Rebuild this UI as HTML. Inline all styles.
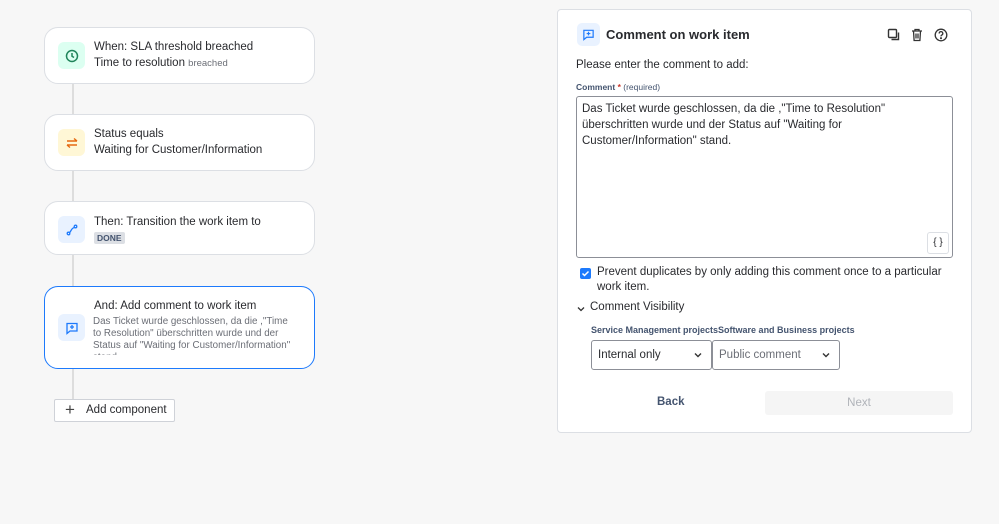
<!DOCTYPE html>
<html><head><meta charset="utf-8"><style>
*{box-sizing:border-box;margin:0;padding:0}
body{width:999px;height:524px;background:#f7f7f7;font-family:"Liberation Sans",sans-serif;color:#292a2e;position:relative;overflow:hidden;font-size:12px}
.abs{position:absolute}
.line{position:absolute;left:72px;width:2px;background:#ddd}
.card{position:absolute;left:44px;width:271px;background:#fff;border:1px solid #dcdfe4;border-radius:14px}
.ic{position:absolute;left:13px;width:27px;height:27px;border-radius:6px;display:flex;align-items:center;justify-content:center}
.t{position:absolute;left:49px;font-size:11.5px;line-height:17px;white-space:nowrap}
.panel{position:absolute;left:557px;top:9px;width:415px;height:424px;background:#fff;border:1px solid #dcdfe4;border-radius:4px}
.sel{position:absolute;top:330px;height:30px;border:1px solid #8c8f97;border-radius:3px;background:#fff;font-size:11.5px;line-height:28px;padding-left:6px}
.chev{position:absolute;right:9px;top:11px}
</style></head><body>
<div class="line" style="top:83px;height:320px"></div>

<div class="card" style="top:27px;height:57px">
 <div class="ic" style="top:14px;background:#dcfff1"><svg width="14" height="14" viewBox="0 0 14 14"><circle cx="7" cy="7" r="5.5" fill="none" stroke="#1f845a" stroke-width="1.5"/><path d="M7 4v3.2l2 1.3" fill="none" stroke="#1f845a" stroke-width="1.5"/></svg></div>
 <div class="t" style="top:11px">When: SLA threshold breached</div>
 <div class="t" style="top:27px">Time to resolution <span style="font-size:9.5px;color:#6b6e76">breached</span></div>
</div>

<div class="card" style="top:114px;height:57px">
 <div class="ic" style="top:14px;background:#fff7d6"><svg width="14" height="14" viewBox="0 0 14 14" fill="none" stroke="#e56910" stroke-width="1.4"><path d="M2 5h10M9 2.5l3 2.5M12 9H2M5 11.5L2 9"/></svg></div>
 <div class="t" style="top:11px">Status equals</div>
 <div class="t" style="top:27px">Waiting for Customer/Information</div>
</div>

<div class="card" style="top:201px;height:54px">
 <div class="ic" style="top:14px;background:#e9f2ff"><svg width="14" height="14" viewBox="0 0 14 14" fill="none" stroke="#1d7afc" stroke-width="1.3"><circle cx="3.5" cy="10.5" r="1.3"/><circle cx="10.5" cy="3.5" r="1.3"/><path d="M4.5 9.5C6 9 6 5 9.5 4.5"/></svg></div>
 <div class="t" style="top:12px">Then: Transition the work item to</div>
 <div class="abs" style="left:49px;top:30px;background:#dcdfe4;font-size:8.5px;font-weight:bold;padding:1px 3px;border-radius:2px;color:#44546f">DONE</div>
</div>

<div class="card" style="top:286px;height:83px;border:1.5px solid #1d7afc;overflow:hidden">
 <div class="ic" style="top:27px;background:#e9f2ff"><svg width="14" height="14" viewBox="0 0 14 14" fill="none" stroke="#1d7afc" stroke-width="1.3"><path d="M2 2.5h10v7.5H5l-3 2.5z"/><path d="M7 4v4M5 6h4"/></svg></div>
 <div class="t" style="top:11px">And: Add comment to work item</div>
 <div class="abs" style="left:48px;top:29px;width:205px;height:39px;overflow:hidden;font-size:9.8px;line-height:12px;color:#6b6e76">Das Ticket wurde geschlossen, da die ,"Time to Resolution" überschritten wurde und der Status auf "Waiting for Customer/Information" stand.</div>
</div>

<div class="abs" style="left:54px;top:399px;width:121px;height:23px;border:1px solid #cfd2d8;background:#fff;border-radius:2px;font-size:11.5px;line-height:21px">
 <span style="position:absolute;left:10px;top:-1px;font-size:17px;color:#444">+</span><span style="position:absolute;left:31px">Add component</span>
</div>

<div class="panel">
 <div class="abs" style="left:19px;top:13px;width:23px;height:23px;background:#e9f2ff;border-radius:5px;display:flex;align-items:center;justify-content:center"><svg width="13" height="13" viewBox="0 0 14 14" fill="none" stroke="#1d7afc" stroke-width="1.3"><path d="M2 2.5h10v7.5H5l-3 2.5z"/><path d="M7 4v4M5 6h4"/></svg></div>
 <div class="abs" style="left:48px;top:17px;font-size:13px;font-weight:bold">Comment on work item</div>
 <svg class="abs" style="left:329px;top:18px" width="14" height="14" viewBox="0 0 14 14" fill="none" stroke="#333" stroke-width="1.4"><rect x="1.5" y="1.5" width="8" height="8" rx="1"/><path d="M11.5 4.5v7h-7"/></svg>
 <svg class="abs" style="left:353px;top:18px" width="12" height="14" viewBox="0 0 12 14" fill="none" stroke="#333" stroke-width="1.3"><path d="M1 3h10M4 3V1.5h4V3M2.5 3l.6 9.5h5.8L9.5 3M5 5.5v5M7 5.5v5"/></svg>
 <svg class="abs" style="left:376px;top:18px" width="14" height="14" viewBox="0 0 14 14" fill="none" stroke="#333" stroke-width="1.3"><circle cx="7" cy="7" r="5.8"/><path d="M5.2 5.5a1.8 1.8 0 1 1 2.5 1.6c-.5.3-.7.6-.7 1.3"/><circle cx="7" cy="10.2" r=".4" fill="#333"/></svg>
 <div class="abs" style="left:18px;top:49px;font-size:11.5px">Please enter the comment to add:</div>
 <div class="abs" style="left:18px;top:72px;font-size:8.5px;font-weight:bold;color:#44546f">Comment <span style="color:#c9372c">*</span> <span style="font-weight:normal">(required)</span></div>
 <div class="abs" style="left:18px;top:86px;width:377px;height:162px;border:1px solid #8c8f97;border-radius:3px;padding:4px 5px;font-size:11.5px;line-height:16px">Das Ticket wurde geschlossen, da die ,"Time to Resolution"<br>überschritten wurde und der Status auf "Waiting for<br>Customer/Information" stand.
  <div class="abs" style="right:3px;bottom:3px;width:22px;height:22px;border:1px solid #dcdfe4;border-radius:3px;font-size:10px;text-align:center;line-height:20px">{ }</div>
 </div>
 <div class="abs" style="left:22px;top:258px;width:11px;height:11px;background:#1d7afc;border-radius:2px"><svg width="11" height="11" viewBox="0 0 11 11"><path d="M2.5 5.5l2 2 4-4" fill="none" stroke="#fff" stroke-width="1.5"/></svg></div>
 <div class="abs" style="left:39px;top:255px;width:360px;font-size:11.5px;line-height:15px">Prevent duplicates by only adding this comment once to a particular work item.</div>
 <svg class="abs" style="left:19px;top:296px" width="8" height="6" viewBox="0 0 8 6"><path d="M1 1.5l3 3 3-3" fill="none" stroke="#333" stroke-width="1.3"/></svg>
 <div class="abs" style="left:32px;top:291px;font-size:11.5px">Comment Visibility</div>
 <div class="abs" style="left:33px;top:315px;font-size:9px;font-weight:bold;color:#44546f">Service Management projectsSoftware and Business projects</div>
 <div class="sel" style="left:33px;width:121px">Internal only<svg class="chev" width="8" height="6" viewBox="0 0 8 6"><path d="M1 1.5l3 3 3-3" fill="none" stroke="#333" stroke-width="1.4"/></svg></div>
 <div class="sel" style="left:154px;width:128px;color:#6b6e76">Public comment<svg class="chev" width="8" height="6" viewBox="0 0 8 6"><path d="M1 1.5l3 3 3-3" fill="none" stroke="#333" stroke-width="1.4"/></svg></div>
 <div class="abs" style="left:99px;top:386px;font-size:11.5px;font-weight:bold;color:#44546f">Back</div>
 <div class="abs" style="left:207px;top:381px;width:188px;height:24px;background:#f5f5f5;border-radius:3px;text-align:center;line-height:24px;font-size:11.5px;color:#b0b3b9">Next</div>
</div>
</body></html>
